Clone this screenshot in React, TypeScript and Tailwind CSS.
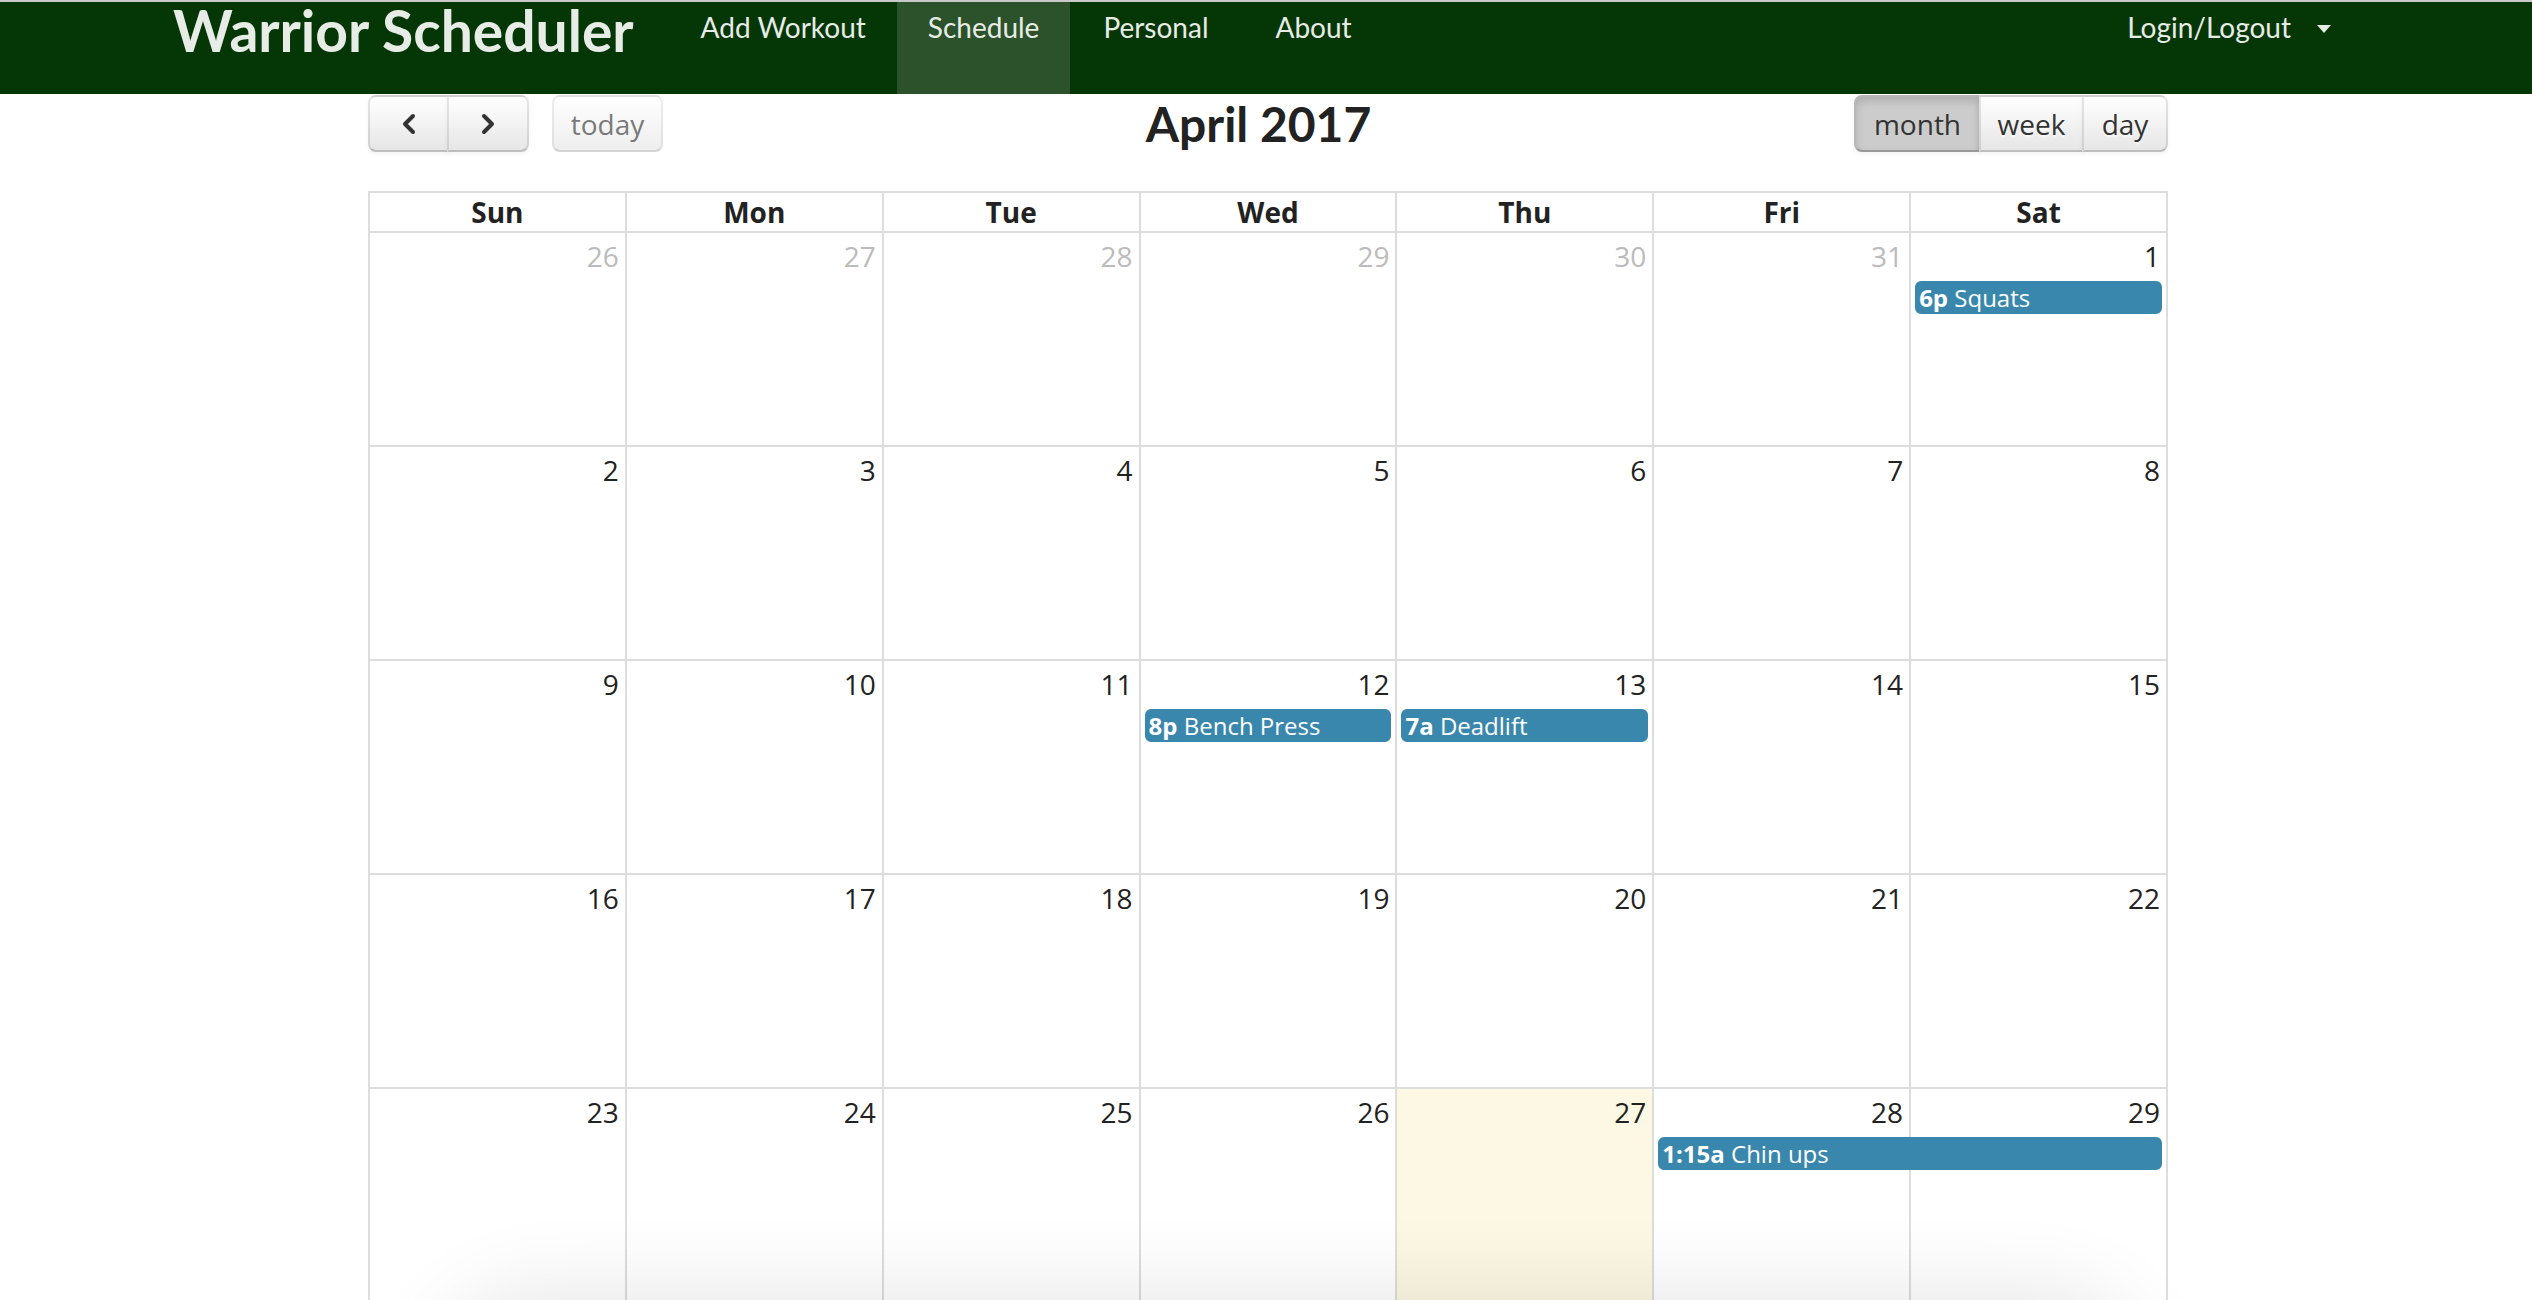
import React from 'react';

type CalEvent = { time: string; title: string; place: string };
type Week = { days: { n: number; other?: boolean; today?: boolean }[]; events: CalEvent[] };

const colStart = ['col-start-1', 'col-start-2', 'col-start-3', 'col-start-4', 'col-start-5', 'col-start-6', 'col-start-7'];

const weeks: Week[] = [
  {
    days: [{ n: 26, other: true }, { n: 27, other: true }, { n: 28, other: true }, { n: 29, other: true }, { n: 30, other: true }, { n: 31, other: true }, { n: 1 }],
    events: [{ time: '6p', title: 'Squats', place: 'col-start-7 col-span-1' }],
  },
  { days: [2, 3, 4, 5, 6, 7, 8].map((n) => ({ n })), events: [] },
  {
    days: [9, 10, 11, 12, 13, 14, 15].map((n) => ({ n })),
    events: [
      { time: '8p', title: 'Bench Press', place: 'col-start-4 col-span-1' },
      { time: '7a', title: 'Deadlift', place: 'col-start-5 col-span-1' },
    ],
  },
  { days: [16, 17, 18, 19, 20, 21, 22].map((n) => ({ n })), events: [] },
  {
    days: [23, 24, 25, 26, 27, 28, 29].map((n) => ({ n, today: n === 27 })),
    events: [{ time: '1:15a', title: 'Chin ups', place: 'col-start-6 col-span-2' }],
  },
];

const dayNames = ['Sun', 'Mon', 'Tue', 'Wed', 'Thu', 'Fri', 'Sat'];

const btn =
  'h-[57px] border-2 border-black/10 border-b-black/25 bg-linear-to-b from-white to-[#e6e6e6] text-[#333] [text-shadow:0_2px_2px_rgba(255,255,255,0.75)] shadow-[inset_0_2px_0_rgba(255,255,255,0.2),0_2px_4px_rgba(0,0,0,0.05)] flex items-center justify-center';

const Chevron = ({ dir }: { dir: 'left' | 'right' }) => (
  <svg width="16" height="22" viewBox="0 0 16 22" fill="none">
    <polyline
      points={dir === 'left' ? '12,3 4,11 12,19' : '4,3 12,11 4,19'}
      stroke="#333"
      strokeWidth="4"
      strokeLinecap="round"
      strokeLinejoin="round"
    />
  </svg>
);

const App: React.FC = () => {
  return (
    <div className="relative h-[1300px] w-[2532px] overflow-hidden bg-white">
      {/* navbar */}
      <div className="flex h-[94px] items-stretch justify-between border-t-2 border-[#c9c9c9] bg-[#053605] font-['Lato',sans-serif] text-[#e8ece6]">
        <div className="flex items-stretch">
          <div className="ml-[173px] text-[57px] font-bold leading-[56px]">Warrior Scheduler</div>
          <ul className="ml-[36px] flex items-stretch text-[28px] leading-[40px]">
            <li className="px-[31px] pt-[5px]">Add Workout</li>
            <li className="bg-[#2b522b] px-[31px] pt-[5px]">Schedule</li>
            <li className="pl-[33px] pr-[36px] pt-[5px]">Personal</li>
            <li className="px-[31px] pt-[5px]">About</li>
          </ul>
        </div>
        <div className="mr-[170px] flex items-start px-[31px] pt-[5px] text-[28px] leading-[40px]">
          <span>Login/Logout</span>
          <span className="ml-[26px] mt-[18px] h-0 w-0 border-x-[7px] border-t-[8px] border-x-transparent border-t-[#e8ece6]"></span>
        </div>
      </div>

      {/* calendar */}
      <div className="ml-[368px] w-[1800px] font-['Open_Sans',sans-serif] text-[#333]">
        <div className="mt-[1px] flex items-center justify-between">
          <div className="flex items-center text-[28px]">
            <button className={`${btn} w-[81px] rounded-l-[8px]`}>
              <Chevron dir="left" />
            </button>
            <button className={`${btn} -ml-[2px] w-[82px] rounded-r-[8px]`}>
              <Chevron dir="right" />
            </button>
            <button className="ml-[23px] flex h-[57px] w-[111px] items-center justify-center rounded-[8px] border-2 border-black/10 border-b-black/25 bg-linear-to-b from-white to-[#e6e6e6] text-[#333] opacity-65">
              today
            </button>
          </div>
          <h2 className="font-['Lato',sans-serif] text-[48px] font-bold leading-[57px] text-[#222]">April 2017</h2>
          <div className="flex items-center text-[28px]">
            <button className="flex h-[57px] w-[127px] items-center justify-center rounded-l-[8px] border-2 border-black/10 border-b-black/25 bg-[#ccc] text-[#333] shadow-[inset_0_4px_8px_rgba(0,0,0,0.15),0_2px_4px_rgba(0,0,0,0.05)]">
              month
            </button>
            <button className={`${btn} -ml-[2px] w-[105px]`}>week</button>
            <button className={`${btn} -ml-[2px] w-[86px] rounded-r-[8px]`}>day</button>
          </div>
        </div>

        <div className="mt-[39px] border-l-2 border-t-2 border-[#ddd]">
          <div className="grid grid-cols-7">
            {dayNames.map((d) => (
              <div key={d} className="h-[40px] border-b-2 border-r-2 border-[#ddd] text-center text-[28px] font-bold leading-[38px] text-[#222]">
                {d}
              </div>
            ))}
          </div>
          {weeks.map((w, wi) => (
            <div key={wi} className="grid h-[214px] grid-cols-7 grid-rows-[42px_auto_1fr]">
              {w.days.map((d, i) => (
                <div
                  key={`bg${i}`}
                  className={`${colStart[i]} row-start-1 row-end-4 border-b-2 border-r-2 border-[#ddd] ${d.today ? 'bg-[#fcf8e3]' : ''}`}
                ></div>
              ))}
              {w.days.map((d, i) => (
                <div
                  key={`n${i}`}
                  className={`${colStart[i]} row-start-1 pr-[8px] pt-[4px] text-right text-[28px] leading-[38px] ${d.other ? 'text-[#bbb]' : 'text-[#222]'}`}
                >
                  {d.n}
                </div>
              ))}
              {w.events.map((e, i) => (
                <div
                  key={`e${i}`}
                  className={`${e.place} row-start-2 ml-[4px] mr-[6px] mt-[6px] h-[33px] overflow-hidden whitespace-nowrap rounded-[6px] border-2 border-[#3a87ad] bg-[#3a87ad] pl-[2px] text-[24px] leading-[29px] text-white`}
                >
                  <span className="font-bold">{e.time}</span> {e.title}
                </div>
              ))}
            </div>
          ))}
        </div>
      </div>

      {/* soft shadow rising from below the window */}
      <div className="pointer-events-none absolute left-[460px] top-[1320px] h-[200px] w-[1660px] rounded-[80px] bg-white shadow-[0_0_90px_24px_rgba(0,0,0,0.11)]"></div>
    </div>
  );
};

export default App;
